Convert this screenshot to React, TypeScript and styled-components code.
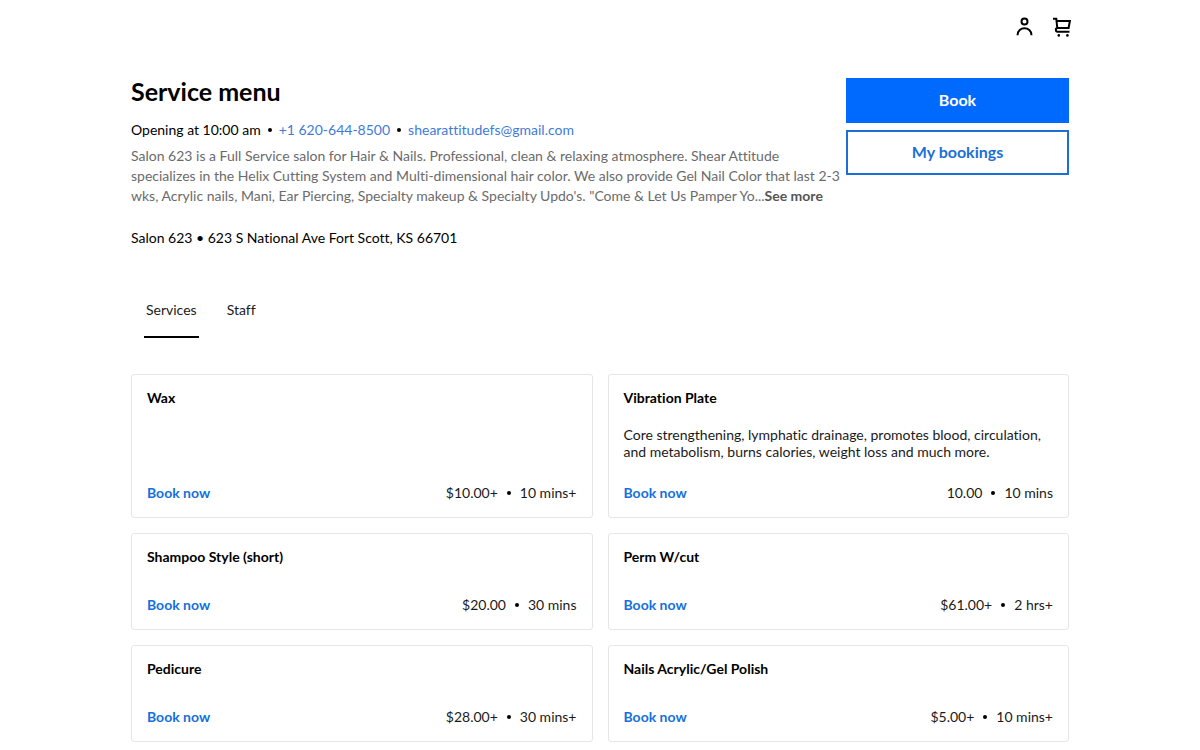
import * as React from 'react'
import styled, { createGlobalStyle } from 'styled-components'

const GlobalStyle = createGlobalStyle`
  * {
    box-sizing: border-box;
  }

  body {
    margin: 0;
    background: #fff;
    color: #1a1a1a;
    font-family: Lato, 'Liberation Sans', sans-serif;
    font-size: 14px;
    font-variant-ligatures: none;
    line-height: 20px;
  }
`

const Page = styled.div`
  max-width: 970px;
  margin: 0 auto;
  padding: 0 16px 8px;
`

const TopBar = styled.header`
  display: flex;
  justify-content: flex-end;
  gap: 14px;
  height: 54px;
  margin-right: -5px;
  align-items: center;
`

const IconButton = styled.button`
  display: flex;
  padding: 0;
  border: 0;
  background: none;
  color: #000;
  cursor: pointer;
`

const Intro = styled.section`
  display: flex;
  gap: 15px;
  padding-top: 24px;
`

const Details = styled.div`
  flex: 1;
  min-width: 0;
`

const Title = styled.h1`
  margin: 0 0 16px;
  color: #000;
  font-size: 25px;
  font-weight: 700;
  line-height: 26px;
`

const Contact = styled.div`
  display: flex;
  align-items: center;
  gap: 7px;
  color: #000;
`

const Dot = styled.span`
  flex: none;
  width: 4px;
  height: 4px;
  border-radius: 50%;
  background: #000;
`

const ContactLink = styled.a`
  color: #3f7bd8;
  text-decoration: none;
`

const About = styled.p`
  margin: 6px 0 0;
  color: #6b6b6b;
  white-space: nowrap;
`

const SeeMore = styled.button`
  padding: 0;
  border: 0;
  background: none;
  color: #555;
  font: inherit;
  font-weight: 700;
  cursor: pointer;
`

const Address = styled.p`
  margin: 22px 0 0;
  color: #000;
`

const Actions = styled.div`
  display: flex;
  flex: none;
  flex-direction: column;
  gap: 7px;
  width: 223px;
`

const ActionButton = styled.button<{ $primary?: boolean }>`
  height: 45px;
  padding: 0 0 2px;
  border: 2px solid ${({ $primary }) => ($primary ? '#006aff' : '#1b6fd6')};
  background: ${({ $primary }) => ($primary ? '#006aff' : '#fff')};
  color: ${({ $primary }) => ($primary ? '#fff' : '#1b6fd6')};
  font-family: inherit;
  font-size: 16px;
  font-weight: 700;
  cursor: pointer;
`

const Tabs = styled.div`
  display: flex;
  gap: 26px;
  margin: 52px 0 36px;
  padding-left: 13px;
`

const Tab = styled.button<{ $active?: boolean }>`
  height: 38px;
  padding: 0 2px 16px;
  border: 0;
  border-bottom: 2px solid ${({ $active }) => ($active ? '#000' : 'transparent')};
  background: none;
  color: #1a1a1a;
  font: inherit;
  cursor: pointer;
`

const Grid = styled.main`
  display: grid;
  grid-template-columns: 1fr 1fr;
  gap: 15px;
`

const Card = styled.article`
  display: flex;
  flex-direction: column;
  min-height: 97px;
  padding: 14px 15px 16px;
  border: 1px solid #e6e6e6;
  border-radius: 3px;
  line-height: 17px;
`

const CardTitle = styled.h2`
  margin: 0;
  color: #000;
  font-size: 14px;
  font-weight: 700;
`

const CardText = styled.p`
  margin: 20px 0 0;
`

const CardFooter = styled.div`
  display: flex;
  align-items: center;
  justify-content: space-between;
  margin-top: auto;
  padding-top: 24px;
`

const BookNow = styled.a`
  color: #1470dc;
  font-weight: 700;
  text-decoration: none;
`

const Terms = styled.div`
  display: flex;
  align-items: center;
  gap: 9px;
`

const services = [
  { name: 'Wax', price: '$10.00+', time: '10 mins+' },
  {
    name: 'Vibration Plate',
    text:
      'Core strengthening, lymphatic drainage, promotes blood, circulation, and metabolism, burns calories, weight loss and much more.',
    price: '10.00',
    time: '10 mins',
  },
  { name: 'Shampoo Style (short)', price: '$20.00', time: '30 mins' },
  { name: 'Perm W/cut', price: '$61.00+', time: '2 hrs+' },
  { name: 'Pedicure', price: '$28.00+', time: '30 mins+' },
  { name: 'Nails Acrylic/Gel Polish', price: '$5.00+', time: '10 mins+' },
]

const PersonIcon = () => (
  <svg width="24" height="24" viewBox="0 0 24 24" fill="none" stroke="currentColor" strokeWidth="2">
    <circle cx="12.5" cy="6.4" r="3" />
    <path d="M5.5 20.2c0-9.2 14-9.2 14 0" />
  </svg>
)

const CartIcon = () => (
  <svg width="24" height="24" viewBox="0 0 24 24" fill="none" stroke="currentColor" strokeWidth="2">
    <path d="M3 3.8h3.3l1 9.2M6.5 6h13.4l-1.3 7H7.5c-2.2 0-2.2 3.7 0 3.7h12" />
    <circle cx="8.8" cy="20.4" r="1.3" fill="currentColor" stroke="none" />
    <circle cx="17.4" cy="20.4" r="1.3" fill="currentColor" stroke="none" />
  </svg>
)

export default () => {
  const [tab, setTab] = React.useState('Services')

  return (
    <>
      <GlobalStyle />
      <Page>
        <TopBar>
          <IconButton aria-label="Account">
            <PersonIcon />
          </IconButton>
          <IconButton aria-label="Cart">
            <CartIcon />
          </IconButton>
        </TopBar>

        <Intro>
          <Details>
            <Title>Service menu</Title>
            <Contact>
              <span>Opening at 10:00 am</span>
              <Dot />
              <ContactLink href="tel:+16206448500">+1 620-644-8500</ContactLink>
              <Dot />
              <ContactLink href="mailto:shearattitudefs@gmail.com">shearattitudefs@gmail.com</ContactLink>
            </Contact>
            <About>
              Salon 623 is a Full Service salon for Hair &amp; Nails. Professional, clean &amp; relaxing atmosphere.
              Shear Attitude
              <br />
              specializes in the Helix Cutting System and Multi-dimensional hair color. We also provide Gel Nail Color
              that last 2-3
              <br />
              wks, Acrylic nails, Mani, Ear Piercing, Specialty makeup &amp; Specialty Updo's. "Come &amp; Let Us
              Pamper Yo...<SeeMore>See more</SeeMore>
            </About>
            <Address>Salon 623 • 623 S National Ave Fort Scott, KS 66701</Address>
          </Details>
          <Actions>
            <ActionButton $primary>Book</ActionButton>
            <ActionButton>My bookings</ActionButton>
          </Actions>
        </Intro>

        <Tabs role="tablist">
          {['Services', 'Staff'].map(name => (
            <Tab key={name} role="tab" aria-selected={tab === name} $active={tab === name} onClick={() => setTab(name)}>
              {name}
            </Tab>
          ))}
        </Tabs>

        <Grid>
          {services.map(({ name, text, price, time }) => (
            <Card key={name}>
              <CardTitle>{name}</CardTitle>
              {text && <CardText>{text}</CardText>}
              <CardFooter>
                <BookNow href="#book">Book now</BookNow>
                <Terms>
                  <span>{price}</span>
                  <Dot />
                  <span>{time}</span>
                </Terms>
              </CardFooter>
            </Card>
          ))}
        </Grid>
      </Page>
    </>
  )
}
